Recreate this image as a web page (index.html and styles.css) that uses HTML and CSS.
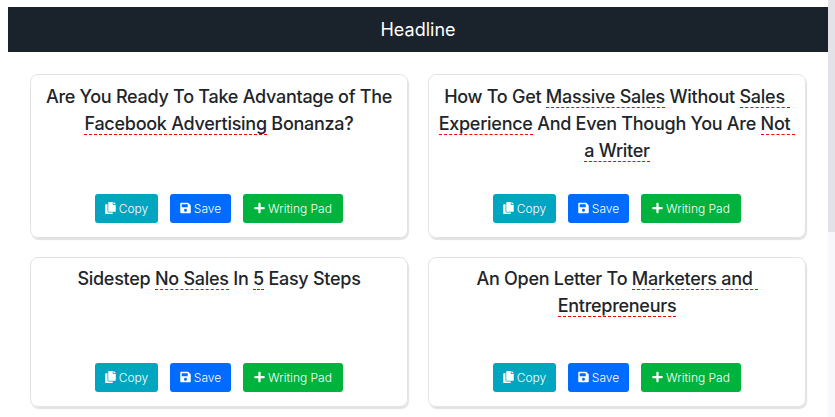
FILE: index.html
```html
<!DOCTYPE html>
<html lang="en">
<head>
  <meta charset="UTF-8">
  <meta name="viewport" content="width=device-width, initial-scale=1.0">
  <title>Headline</title>
  <link rel="stylesheet" href="styles.css">
</head>
<body>
  <svg class="icon-defs" width="0" height="0">
    <symbol id="icon-copy" viewBox="0 0 448 512"><path d="M320 448v40c0 13.255-10.745 24-24 24H24c-13.255 0-24-10.745-24-24V120c0-13.255 10.745-24 24-24h72v296c0 30.879 25.121 56 56 56h168zm0-344V0H152c-13.255 0-24 10.745-24 24v368c0 13.255 10.745 24 24 24h272c13.255 0 24-10.745 24-24V128H344c-13.2 0-24-10.8-24-24zm120.971-31.029L375.029 7.029A24 24 0 0 0 358.059 0H352v96h96v-6.059a24 24 0 0 0-7.029-16.97z"/></symbol>
    <symbol id="icon-save" viewBox="0 0 448 512"><path d="M433.941 129.941l-83.882-83.882A48 48 0 0 0 316.118 32H48C21.49 32 0 53.49 0 80v352c0 26.51 21.49 48 48 48h352c26.51 0 48-21.49 48-48V163.882a48 48 0 0 0-14.059-33.941zM224 416c-35.346 0-64-28.654-64-64 0-35.346 28.654-64 64-64s64 28.654 64 64c0 35.346-28.654 64-64 64zm96-304.52V212c0 6.627-5.373 12-12 12H76c-6.627 0-12-5.373-12-12V108c0-6.627 5.373-12 12-12h228.52c3.183 0 6.235 1.264 8.485 3.515l3.48 3.48A11.996 11.996 0 0 1 320 111.48z"/></symbol>
    <symbol id="icon-plus" viewBox="0 0 448 512"><path d="M416 208H272V64c0-17.67-14.33-32-32-32h-32c-17.67 0-32 14.33-32 32v144H32c-17.67 0-32 14.33-32 32v32c0 17.67 14.33 32 32 32h144v144c0 17.67 14.33 32 32 32h32c17.67 0 32-14.33 32-32V304h144c17.67 0 32-14.33 32-32v-32c0-17.67-14.33-32-32-32z"/></symbol>
  </svg>

  <div class="page">
    <header class="topbar">Headline</header>
    <div class="grid">

      <div class="card card-tall">
        <h2 class="title">Are You Ready To Take Advantage of The <span class="word">Facebook Advertising</span> Bonanza?</h2>
        <div class="actions">
          <a class="btn btn-copy"><svg class="icon"><use href="#icon-copy"/></svg>Copy</a>
          <a class="btn btn-save"><svg class="icon"><use href="#icon-save"/></svg>Save</a>
          <a class="btn btn-pad"><svg class="icon"><use href="#icon-plus"/></svg>Writing Pad</a>
        </div>
      </div>

      <div class="card card-tall">
        <h2 class="title">How To Get <span class="word">Massive Sales</span> Without <span class="word trail">Sales</span> <span class="word">Experience</span> And Even Though You Are <span class="word trail">Not</span> <span class="word">a Writer</span></h2>
        <div class="actions">
          <a class="btn btn-copy"><svg class="icon"><use href="#icon-copy"/></svg>Copy</a>
          <a class="btn btn-save"><svg class="icon"><use href="#icon-save"/></svg>Save</a>
          <a class="btn btn-pad"><svg class="icon"><use href="#icon-plus"/></svg>Writing Pad</a>
        </div>
      </div>

      <div class="card">
        <h2 class="title">Sidestep <span class="word">No Sales</span> In <span class="word">5</span> Easy Steps</h2>
        <div class="actions">
          <a class="btn btn-copy"><svg class="icon"><use href="#icon-copy"/></svg>Copy</a>
          <a class="btn btn-save"><svg class="icon"><use href="#icon-save"/></svg>Save</a>
          <a class="btn btn-pad"><svg class="icon"><use href="#icon-plus"/></svg>Writing Pad</a>
        </div>
      </div>

      <div class="card">
        <h2 class="title">An Open Letter To <span class="word trail">Marketers and</span> <span class="word">Entrepreneurs</span></h2>
        <div class="actions">
          <a class="btn btn-copy"><svg class="icon"><use href="#icon-copy"/></svg>Copy</a>
          <a class="btn btn-save"><svg class="icon"><use href="#icon-save"/></svg>Save</a>
          <a class="btn btn-pad"><svg class="icon"><use href="#icon-plus"/></svg>Writing Pad</a>
        </div>
      </div>

    </div>
  </div>
  <div class="scrollbar"><div class="scrollbar-thumb"></div></div>
</body>
</html>
```

FILE: styles.css
```css
html, body {
  height: 100%;
}
body {
  margin: 0;
  display: flex;
  overflow: hidden;
  background: #fff;
  color: #212529;
  font-family: Inter, "Liberation Sans", sans-serif;
}
.icon-defs {
  position: absolute;
}
.page {
  flex: 1;
  min-width: 0;
  padding: 7px 0 0 8px;
}
.topbar {
  height: 45px;
  line-height: 45px;
  background: #1a232c;
  color: #fff;
  text-align: center;
  font-size: 18px;
}
.grid {
  display: grid;
  grid-template-columns: 378px 378px;
  column-gap: 20px;
  row-gap: 19px;
  padding: 22px 0 0 22px;
}
.card {
  box-sizing: border-box;
  height: 150px;
  display: flex;
  flex-direction: column;
  justify-content: space-between;
  padding: 0 8px 14px;
  border: 1px solid #e3e3e6;
  border-radius: 8px;
  box-shadow: 1px 2px 1px #e2e2e2;
  text-align: center;
}
.card-tall {
  height: 164px;
}
.title {
  margin: 7px 0 0;
  font-size: 18px;
  font-weight: 500;
  letter-spacing: -0.27px;
  line-height: 27px;
}
.card-tall .title {
  margin-top: 8px;
}
.word {
  border-bottom: 1px dashed #f00;
}
.trail {
  padding-right: 5px;
}
.actions {
  display: flex;
  justify-content: center;
  gap: 12px;
}
.btn {
  box-sizing: border-box;
  display: flex;
  align-items: center;
  justify-content: center;
  height: 29px;
  padding-bottom: 1px;
  border-radius: 3px;
  color: #fff;
  font-size: 12px;
  font-weight: 300;
}
.btn-copy {
  width: 63px;
  background: #00a5bf;
}
.btn-save {
  width: 61px;
  background: #006bff;
}
.btn-pad {
  width: 100px;
  background: #00b33c;
}
.icon {
  width: 11px;
  height: 12px;
  margin-right: 3px;
  fill: #fff;
}
.scrollbar {
  flex: none;
  width: 7px;
  background: #f6f6fb;
}
.scrollbar-thumb {
  height: 232px;
  background: #e2e2e8;
}
```
